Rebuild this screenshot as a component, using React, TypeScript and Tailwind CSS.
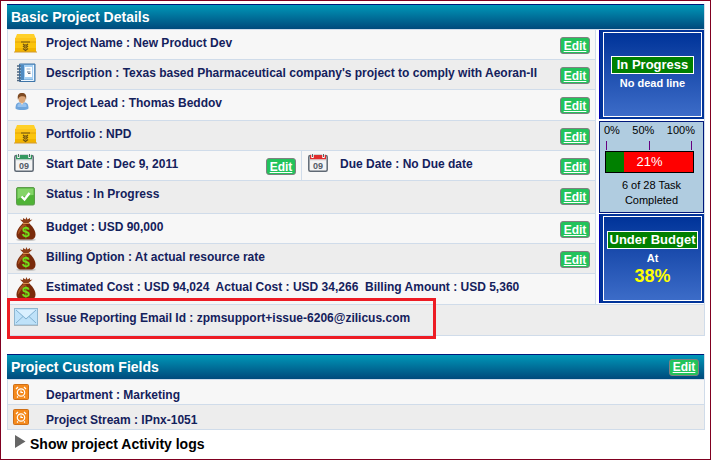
import type { ReactNode } from 'react';

function BoxIcon() {
  return (
    <svg width="23" height="20" viewBox="0 0 23 20" aria-hidden="true">
      <path d="M3 1h17l2 5H1z" fill="#ffd029" />
      <path d="M1 5h21v4H1z" fill="#fdc51a" />
      <path d="M1 9h21v10H1z" fill="#fbc40c" />
      <path d="M1 15h21v4H1z" fill="#f2b400" />
      <path d="M0 19h23" stroke="#d39a2c" />
      <path d="M1 9h21" stroke="#e2a409" />
      <path d="M7 9h9" stroke="#6b5212" />
      <path d="M9 11l2.500 2L14 11M9 13l2.500 2L14 13M9 15.500l2.500 2 2.500-2" stroke="#6f5210" fill="none" strokeWidth="1.300" />
      <path d="M11.500 11v6" stroke="#a47d18" />
    </svg>
  );
}

function NotebookIcon() {
  return (
    <svg width="20" height="20" viewBox="0 0 20 20" aria-hidden="true">
      <path d="M3.500 1h15.500v17.500H3.500z" fill="#7fb4e0" stroke="#3f75a8" />
      <path d="M5 2h3v15H5z" fill="#4f8bc2" />
      <path d="M8 2h9v14H8z" fill="#a6d0f3" />
      <path d="M17.500 2v15.500H5" stroke="#eef7ff" fill="none" />
      <path d="M9 4h7v10H9z" fill="#fff" />
      <path d="M10.500 6h4" stroke="#9db8d2" />
      <path d="M11 9h3.500M12 10.500h2.500" stroke="#5c6d80" />
      <path d="M1 3h4M1 6h4M1 9h4M1 12h4M1 15h4M1 17.500h4" stroke="#4c6580" strokeWidth="1.300" />
    </svg>
  );
}

function UserIcon() {
  return (
    <svg width="14" height="18" viewBox="0 0 14 18" aria-hidden="true">
      <path d="M.5 15.500C.5 11 2 9.500 5 9.500h4c3 0 4.500 1.500 4.500 6-2 2-11 2-13 0z" fill="#6fa5dc" />
      <path d="M2.500 12c1-1.500 2-2 3.500-1.500l1 1 1-1c1.500-.5 2.500 0 3.500 1.500v2h-9z" fill="#97c2ee" />
      <path d="M5 9l2 3 2-3z" fill="#f5d9bd" />
      <ellipse cx="7" cy="5.500" rx="3.500" ry="4.500" fill="#dba577" />
      <path d="M3 7C2 1.500 4 0 7 0s5 1.500 4 7c-.5-2-.5-3-1.500-3.500-1.500 0-3-.5-4 0C4 4 3.500 5 3 7z" fill="#7d4a22" />
    </svg>
  );
}

function CalendarIcon({ color }: { color: string }) {
  return (
    <svg width="20" height="18" viewBox="0 0 20 18" aria-hidden="true">
      <rect x=".8" y="1.500" width="18.400" height="15.700" rx="1.500" fill="#f4f4f4" stroke="#5f6974" strokeWidth="1.500" />
      <path d="M2 1h16v4.500H2z" fill={color} />
      <path d="M4.500 0v4M15.500 0v4" stroke="#fff" strokeWidth="2.400" />
      <path d="M4.500 0v3M15.500 0v3" stroke="#566" />
      <path d="M2 6h16" stroke="#d5d9dc" />
      <text x="10" y="15" textAnchor="middle" fontSize="9" fontWeight="bold" fill="#555c66" fontFamily="Liberation Sans, sans-serif">
        09
      </text>
    </svg>
  );
}

function CheckIcon() {
  return (
    <svg width="19" height="19" viewBox="0 0 19 19" aria-hidden="true">
      <rect x=".5" y=".5" width="18" height="17.500" rx="1.500" fill="#4fb336" stroke="#5d9b4b" />
      <path d="M1.500 1.500h16V8c-5 0-11 1-16 4z" fill="#84d468" />
      <path d="M5.500 9.500l3 3 5-6.500" stroke="#fff" strokeWidth="2.400" fill="none" />
    </svg>
  );
}

function MoneyIcon() {
  return (
    <svg width="20" height="24" viewBox="0 0 20 24" aria-hidden="true">
      <ellipse cx="10" cy="22.800" rx="10" ry="1.200" fill="#c4c4c4" />
      <path d="M7.500 6L4 2.500l3 .5V1l2.500 1.500L10.500 0l1 2.500L14 1v2l2.500-.5L12.500 6z" fill="#8d3d17" />
      <path d="M7 6h6c3 3 6.500 7 6.500 11.500 0 3.500-2 5-4.500 5H5c-2.500 0-4.500-1.500-4.500-5C.5 13 4 9 7 6z" fill="#7a2b0b" />
      <path d="M7.500 7C4 10 2 13 2 17c1 2 3-7 9-9z" fill="#a8511f" />
      <path d="M7 6.500h6" stroke="#d58a4a" />
      <text x="10" y="19.500" textAnchor="middle" fontSize="14" fontWeight="bold" fill="#72e11c" fontFamily="Liberation Sans, sans-serif">
        $
      </text>
    </svg>
  );
}

function MailIcon() {
  return (
    <svg width="24" height="18" viewBox="0 0 24 18" aria-hidden="true">
      <rect x=".5" y=".5" width="23" height="16.500" fill="#bfe2f9" stroke="#8fb6d0" />
      <path d="M2 2h20L12 10z" fill="#daf0ff" />
      <path d="M2 2l10 9L22 2M2 15l7-6.500M22 15l-7-6.500" stroke="#82b1d1" fill="none" />
      <path d="M0 17.500h24" stroke="#a9b4bb" />
    </svg>
  );
}

function AlarmIcon() {
  return (
    <svg width="16" height="16" viewBox="0 0 16 16" aria-hidden="true">
      <rect x=".5" y=".5" width="15" height="15" rx="1" fill="#f58a1c" stroke="#cf6f16" />
      <circle cx="8" cy="8.500" r="3.700" stroke="#fff" strokeWidth="1.200" fill="none" />
      <path d="M8 6.500v2h2M3 5l2-2M13 5l-2-2M5 12.500l-1 1M11 12.500l1 1" stroke="#fff" strokeWidth="1.200" fill="none" />
    </svg>
  );
}

function EditLink() {
  return (
    <a
      href="#edit"
      className="flex h-[17px] w-[30px] items-center justify-center rounded-[3px] border border-[#808080] bg-[#22c35b] text-[12px] leading-4 font-bold text-white underline"
    >
      Edit
    </a>
  );
}

interface FieldProps {
  icon: ReactNode;
  children: ReactNode;
  editable?: boolean;
}

function Field({ icon, children, editable }: FieldProps) {
  return (
    <div className="flex h-full min-w-0 flex-1 items-start px-[5px]">
      <span className="flex w-[33px] shrink-0 pt-[3px] pl-px">{icon}</span>
      <span className="flex-1 pt-[5px] leading-4 whitespace-pre">{children}</span>
      {editable && (
        <span className="pt-[7px]">
          <EditLink />
        </span>
      )}
    </div>
  );
}

function CustomField({ children }: { children: ReactNode }) {
  return (
    <div className="flex pl-[5px]">
      <span className="w-[33px] shrink-0 pt-1">
        <AlarmIcon />
      </span>
      <span className="pt-[7px] leading-4">{children}</span>
    </div>
  );
}

function SectionHeader({ title, editable }: { title: string; editable?: boolean }) {
  return (
    <div className="flex h-[25px] items-center justify-between border-t border-[#00187b] bg-linear-to-b from-[#0098b8] to-[#004a7c] pr-[5px] pl-1">
      <h2 className="text-[14px] leading-4 font-bold text-white">{title}</h2>
      {editable && <EditLink />}
    </div>
  );
}

function StatusTile({ children }: { children: ReactNode }) {
  return (
    <div className="h-[89px] border-l border-[#0000b0] bg-[#003399] p-0.5 pl-[3px]">
      <div className="flex h-full flex-col items-center border border-white bg-linear-to-b from-[#003399] to-[#3c6cc8] text-white">
        {children}
      </div>
    </div>
  );
}

function ProgressTile() {
  const done = 21;
  return (
    <div className="h-[92px] border border-[#00187b] bg-[#b0cce0] text-center font-normal text-black">
      <div className="flex justify-between pr-2 pl-1 text-[11px] leading-4">
        <span>0%</span>
        <span>50%</span>
        <span>100%</span>
      </div>
      <div className="flex justify-between pt-[3px] pr-[11px] pl-1.5">
        <i className="h-[9px] w-px bg-[#660080]" />
        <i className="h-[9px] w-px bg-[#660080]" />
        <i className="h-[9px] w-px bg-[#660080]" />
      </div>
      <div className="mt-px mr-[9px] ml-[5px] grid h-[22px] border border-black bg-[#ff0000]">
        <div className="col-start-1 row-start-1 bg-[#008000]" style={{ width: `${done}%` }} />
        <div className="col-start-1 row-start-1 text-[13px] leading-5 text-white">{done}%</div>
      </div>
      <p className="pt-[5px] text-[11px] leading-[15px]">
        6 of 28 Task
        <br />
        Completed
      </p>
    </div>
  );
}

export default function App() {
  return (
    <main className="border border-[#800020] bg-white pt-[3px] pr-[5px] pb-[5px] pl-1.5 font-['Liberation_Sans',Arial,sans-serif] text-[12px] font-bold text-[#14215c]">
      <section className="border-r border-[#d0dcea]">
        <SectionHeader title="Basic Project Details" />
        <div className="flex border-t border-l border-[#d0dcea]">
          <div className="min-w-0 flex-1 border-r border-[#d0dcea]">
            <div className="h-[30px] border-b border-[#d0dcea] bg-[#f7f7f7]">
              <Field icon={<BoxIcon />} editable>Project Name : New Product Dev</Field>
            </div>
            <div className="h-[30px] border-b border-[#d0dcea] bg-[#ededed]">
              <Field icon={<span className="pl-0.5"><NotebookIcon /></span>} editable>
                Description : Texas based Pharmaceutical company's project to comply with Aeoran-II
              </Field>
            </div>
            <div className="h-[31px] border-b border-[#d0dcea] bg-[#f7f7f7]">
              <Field icon={<span className="pl-px"><UserIcon /></span>} editable>Project Lead : Thomas Beddov</Field>
            </div>
            <div className="h-[30px] border-b border-[#d0dcea] bg-[#ededed]">
              <Field icon={<BoxIcon />} editable>Portfolio : NPD</Field>
            </div>
            <div className="flex h-[30px] border-b border-[#d0dcea] bg-[#f7f7f7]">
              <Field icon={<CalendarIcon color="#35985f" />} editable>Start Date : Dec 9, 2011</Field>
              <div className="flex w-[294px] border-l border-[#d0dcea]">
                <Field icon={<CalendarIcon color="#e02d2d" />} editable>Due Date : No Due date</Field>
              </div>
            </div>
            <div className="h-[33px] border-b border-[#d0dcea] bg-[#ededed]">
              <Field icon={<span className="pt-[3px] pl-0.5"><CheckIcon /></span>} editable>Status : In Progress</Field>
            </div>
            <div className="h-[30px] border-b border-[#d0dcea] bg-[#f7f7f7]">
              <Field icon={<span className="pl-0.5"><MoneyIcon /></span>} editable>Budget : USD 90,000</Field>
            </div>
            <div className="h-[30px] border-b border-[#d0dcea] bg-[#ededed]">
              <Field icon={<span className="pl-0.5"><MoneyIcon /></span>} editable>Billing Option : At actual resource rate</Field>
            </div>
            <div className="h-[30px] bg-[#f7f7f7]">
              <Field icon={<span className="pl-0.5"><MoneyIcon /></span>}>
                {'Estimated Cost : USD 94,024  Actual Cost : USD 34,266  Billing Amount : USD 5,360'}
              </Field>
            </div>
          </div>
          <aside className="ml-[3px] flex w-[105px] shrink-0 flex-col">
            <StatusTile>
              <p className="mt-[23px] border border-white bg-[#008000] px-[5px] text-[13px] leading-4">In Progress</p>
              <p className="mt-px text-[11px] leading-4">No dead line</p>
            </StatusTile>
            <div className="mt-0.5 mb-px">
              <ProgressTile />
            </div>
            <StatusTile>
              <p className="mt-[14px] border border-white bg-[#008000] px-0.5 text-[13px] leading-4 whitespace-nowrap">Under Budget</p>
              <p className="mt-px text-[11px] leading-4">At</p>
              <p className="text-[18px] leading-5 text-[#ffff00]">38%</p>
            </StatusTile>
          </aside>
        </div>
        <div className="relative h-8 border-y border-l border-[#d0dcea] bg-[#ededed]">
          <Field icon={<MailIcon />}>Issue Reporting Email Id : zpmsupport+issue-6206@zilicus.com</Field>
          <div className="absolute -top-[7px] -left-px h-[41px] w-[429px] border-3 border-[#ed1c24]" />
        </div>
      </section>

      <section className="mt-[18px] border-r border-[#d0dcea]">
        <SectionHeader title="Project Custom Fields" editable />
        <div className="border-t border-l border-[#d0dcea]">
          <div className="h-[25px] border-b border-[#d0dcea] bg-[#f7f7f7]">
            <CustomField>Department : Marketing</CustomField>
          </div>
          <div className="h-[25px] border-b border-[#d0dcea] bg-[#ededed]">
            <CustomField>Project Stream : IPnx-1051</CustomField>
          </div>
        </div>
      </section>

      <button type="button" className="mt-1 flex h-5 items-start pl-2 text-[14px] leading-5 font-bold text-black">
        <svg width="11" height="13" viewBox="0 0 11 13" className="mt-px mr-1" aria-hidden="true">
          <path d="M0 0l10.500 6.500L0 13z" fill="#666" />
        </svg>
        Show project Activity logs
      </button>
    </main>
  );
}
